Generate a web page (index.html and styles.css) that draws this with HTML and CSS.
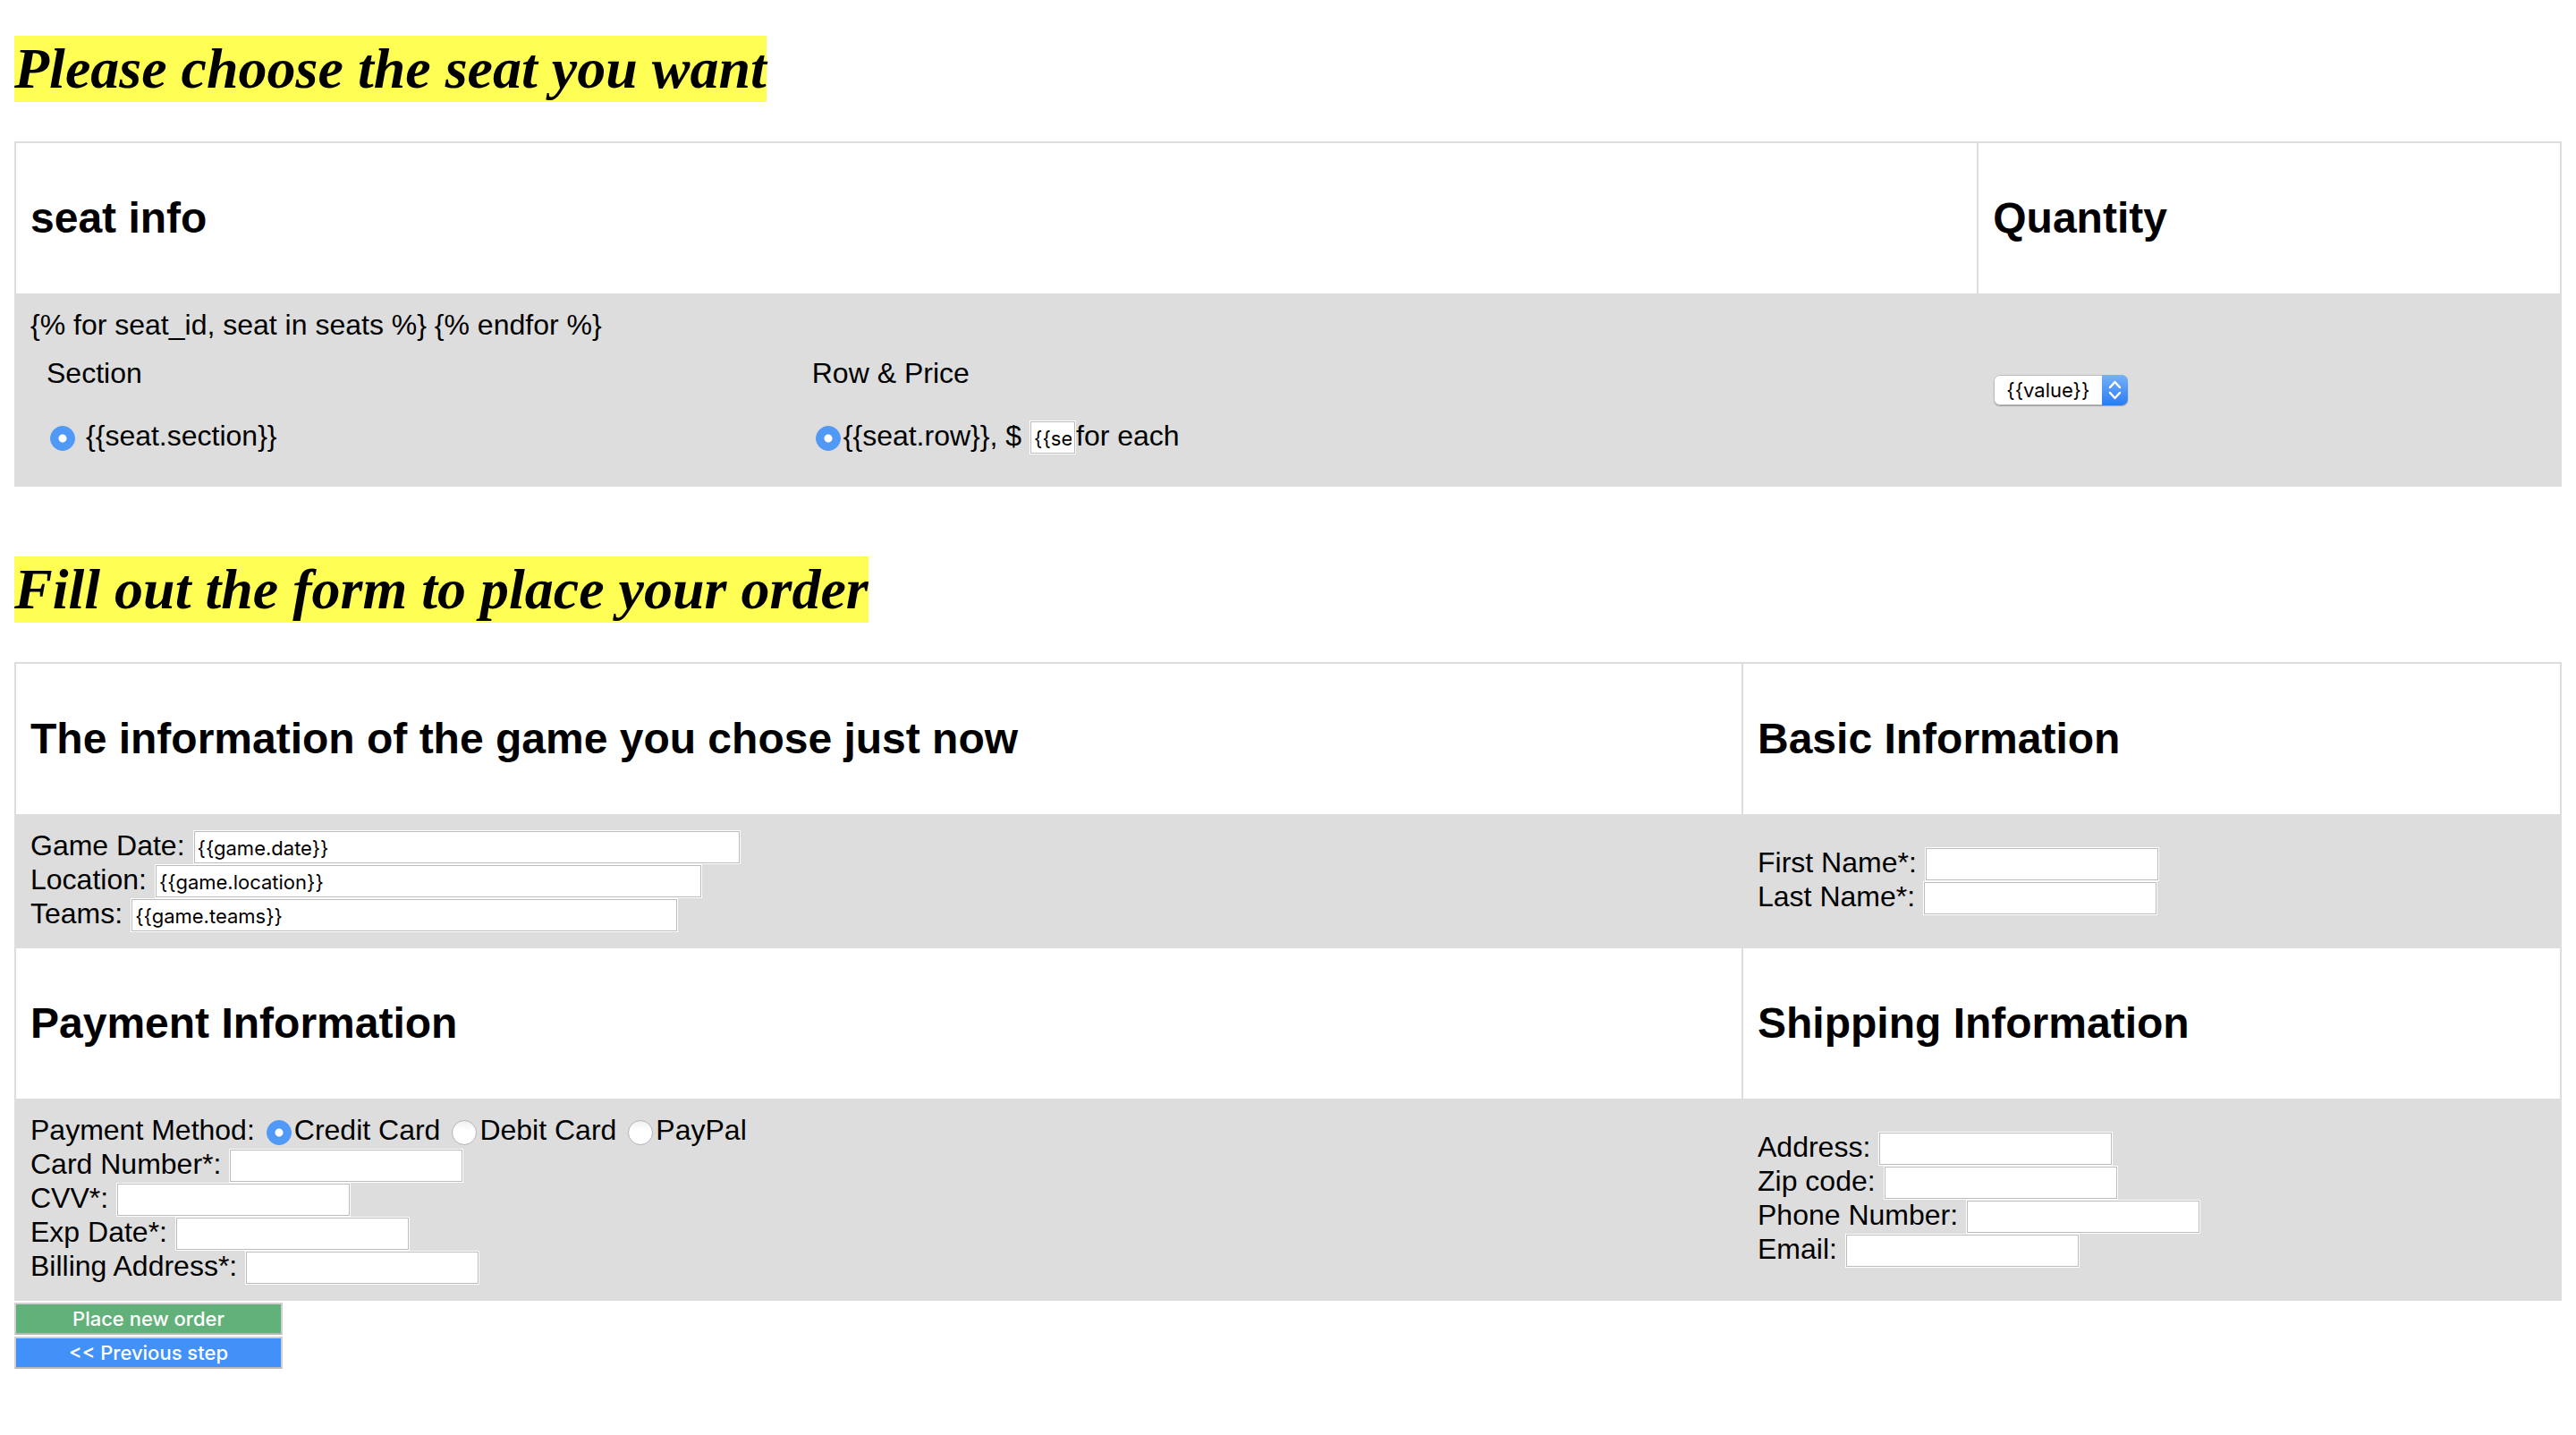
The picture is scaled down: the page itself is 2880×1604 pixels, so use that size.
FILE: index.html
```html
<!DOCTYPE html>
<html lang="en">
<head>
<meta charset="utf-8">
<meta name="viewport" content="width=device-width, initial-scale=1">
<title>Place your order</title>
<link rel="stylesheet" href="styles.css">
</head>
<body>
<form class="order">
  <h1 class="title">Please choose the seat you want</h1>
  <table class="grid">
    <colgroup><col class="col-seat"><col></colgroup>
    <tr>
      <th scope="col"><h2 class="heading">seat info</h2></th>
      <th scope="col"><h2 class="heading" id="quantity-heading">Quantity</h2></th>
    </tr>
    <tr class="shaded">
      <td>
        <div class="line">{% for seat_id, seat in seats %} {% endfor %}</div>
        <table class="grid">
          <colgroup><col class="col-section"><col></colgroup>
          <tr>
            <td><div class="line">Section</div></td>
            <td><div class="line">Row &amp; Price</div></td>
          </tr>
          <tr>
            <td>
              <div class="field">
                <input class="radio" type="radio" name="section" id="section" checked>
                <label class="spaced" for="section">{{seat.section}}</label>
              </div>
            </td>
            <td>
              <div class="field">
                <input class="radio" type="radio" name="row" id="row" checked>
                <label class="space-after" for="row">{{seat.row}}, $</label>
                <input class="text price" type="text" id="price" value="{{seat.price}}" aria-label="Price" readonly>
                <label for="price">for each</label>
              </div>
            </td>
          </tr>
        </table>
      </td>
      <td>
        <div class="picker">
          <select class="select" name="quantity" aria-labelledby="quantity-heading">
            <option>{{value}}</option>
          </select>
          <svg class="arrows" viewBox="0 0 29 34" aria-hidden="true">
            <path d="M9 14l5.500-6 5.500 6M9 20l5.500 6 5.500-6" fill="none" stroke="#fff" stroke-width="2.500" stroke-linecap="round" stroke-linejoin="round"/>
          </svg>
        </div>
      </td>
    </tr>
  </table>

  <h1 class="title title-next">Fill out the form to place your order</h1>
  <table class="grid">
    <colgroup><col class="col-game"><col></colgroup>
    <tr>
      <th scope="col"><h2 class="heading">The information of the game you chose just now</h2></th>
      <th scope="col"><h2 class="heading">Basic Information</h2></th>
    </tr>
    <tr class="shaded">
      <td>
        <div class="field"><label class="space-after" for="date">Game Date:</label><input class="text wide" type="text" id="date" value="{{game.date}}" readonly></div>
        <div class="field"><label class="space-after" for="location">Location:</label><input class="text wide" type="text" id="location" value="{{game.location}}" readonly></div>
        <div class="field"><label class="space-after" for="teams">Teams:</label><input class="text wide" type="text" id="teams" value="{{game.teams}}" readonly></div>
      </td>
      <td>
        <div class="field"><label class="space-after" for="first">First Name*:</label><input class="text" type="text" id="first"></div>
        <div class="field"><label class="space-after" for="last">Last Name*:</label><input class="text" type="text" id="last"></div>
      </td>
    </tr>
    <tr>
      <th scope="col"><h2 class="heading">Payment Information</h2></th>
      <th scope="col"><h2 class="heading">Shipping Information</h2></th>
    </tr>
    <tr class="shaded">
      <td>
        <div class="field" role="radiogroup" aria-labelledby="method">
          <span class="space-after" id="method">Payment Method:</span>
          <input class="radio" type="radio" name="method" id="credit" checked><label class="space-after" for="credit">Credit Card</label>
          <input class="radio" type="radio" name="method" id="debit"><label class="space-after" for="debit">Debit Card</label>
          <input class="radio" type="radio" name="method" id="paypal"><label for="paypal">PayPal</label>
        </div>
        <div class="field"><label class="space-after" for="card">Card Number*:</label><input class="text" type="text" id="card"></div>
        <div class="field"><label class="space-after" for="cvv">CVV*:</label><input class="text" type="text" id="cvv"></div>
        <div class="field"><label class="space-after" for="exp">Exp Date*:</label><input class="text" type="text" id="exp"></div>
        <div class="field"><label class="space-after" for="billing">Billing Address*:</label><input class="text" type="text" id="billing"></div>
      </td>
      <td>
        <div class="field"><label class="space-after" for="address">Address:</label><input class="text" type="text" id="address"></div>
        <div class="field"><label class="space-after" for="zip">Zip code:</label><input class="text" type="text" id="zip"></div>
        <div class="field"><label class="space-after" for="phone">Phone Number:</label><input class="text" type="text" id="phone"></div>
        <div class="field"><label class="space-after" for="email">Email:</label><input class="text" type="text" id="email"></div>
      </td>
    </tr>
  </table>
  <div class="actions">
    <button class="button submit" type="submit">Place new order</button>
    <button class="button back" type="button">&lt;&lt; Previous step</button>
  </div>
</form>
</body>
</html>
```
FILE: styles.css
```css
* {
  box-sizing: border-box;
}

body {
  margin: 0;
  padding: 40px 16px;
  background: #fff;
  color: #000;
  font: 32px/34px "Liberation Sans", Arial, sans-serif;
}

.title {
  width: fit-content;
  margin: 0 0 44px;
  background: #fffe54;
  font: italic bold 64px/74px "Liberation Serif", "Times New Roman", serif;
}

.title-next {
  margin-top: 78px;
}

.grid {
  width: 100%;
  table-layout: fixed;
  border-collapse: collapse;
}

.col-seat {
  width: 77.1%;
}

.col-section {
  width: 39.65%;
}

.col-game {
  width: 67.85%;
}

.grid th,
.grid td {
  padding: 16px;
  border: 2px solid #ddd;
  text-align: left;
  vertical-align: middle;
}

.shaded {
  background: #ddd;
}

.heading {
  margin: 40px 0;
  font-size: 48px;
  line-height: 56px;
}

.line {
  height: 36px;
}

.field {
  display: flex;
  align-items: flex-start;
  height: 38px;
  white-space: nowrap;
}

.space-after {
  margin-right: 9px;
}

.spaced {
  margin-left: 9px;
}

.text {
  width: 262px;
  height: 38px;
  margin: 0;
  padding: 2px 4px 0;
  border: 1px solid #fff;
  border-radius: 0;
  background: #fff;
  box-shadow: inset 0 0 0 1px #bcbcbc;
  color: #000;
  font: 22px/34px Inter, sans-serif;
}

.wide {
  width: 612px;
}

.price {
  width: 52px;
}

.radio {
  appearance: none;
  flex: none;
  width: 28px;
  height: 28px;
  margin: 6px 3px 0 4px;
  border: 1px solid #b4b4b4;
  border-radius: 50%;
  background: linear-gradient(#f0f0f0, #fff 40%);
}

.radio:checked {
  border-color: #5199f6;
  background: radial-gradient(circle, #fff 4px, #5199f6 5px);
}

.picker {
  display: grid;
  width: 150px;
  height: 34px;
  margin-left: 1px;
  overflow: hidden;
  border-radius: 7px;
  box-shadow: 0 1px 1px #999;
}

.select {
  grid-area: 1 / 1;
  appearance: none;
  width: 150px;
  height: 34px;
  margin: 0;
  padding: 0 29px 0 13px;
  border: 1px solid #bbb;
  border-radius: 7px;
  background: #fff;
  color: #000;
  font: 22px/32px Inter, sans-serif;
}

.arrows {
  grid-area: 1 / 1;
  justify-self: end;
  z-index: 1;
  width: 29px;
  height: 34px;
  background: linear-gradient(#76b1f8, #2a7bf6);
  pointer-events: none;
}

.actions {
  display: flex;
  flex-direction: column;
  align-items: flex-start;
  gap: 2px;
  margin-top: 2px;
}

.button {
  width: 300px;
  height: 36px;
  padding: 0;
  border: 2px solid #d0d0d0;
  border-bottom-color: #b8b8b8;
  border-radius: 0;
  color: #fff;
  font: 500 22px/32px Inter, sans-serif;
}

.submit {
  background: #62b17a;
}

.back {
  background: #4191f9;
}
```
